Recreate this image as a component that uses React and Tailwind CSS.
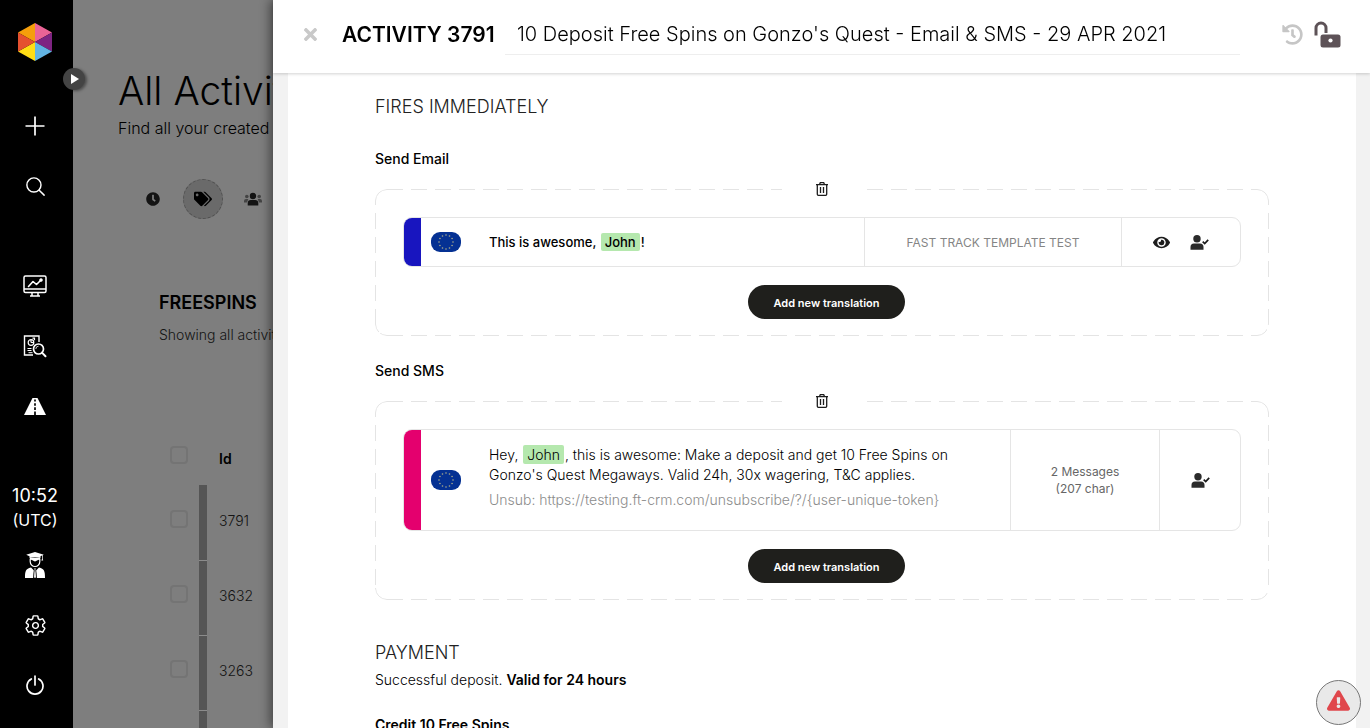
import React from "react";
import { FaTimes, FaHistory, FaEye, FaTags, FaClock, FaExclamationTriangle } from "react-icons/fa";
import { IoSearchOutline, IoSettingsOutline } from "react-icons/io5";

function Logo() {
  return (
    <svg width="34" height="38" viewBox="0 0 34 38" aria-hidden="true">
      <path d="M17 19V0L0 9.5z" fill="#f59e0b" />
      <path d="M17 19V0l17 9.5z" fill="#ea6396" />
      <path d="M17 19 34 9.500v19z" fill="#7e2482" />
      <path d="M17 19 34 28.500 17 38z" fill="#62b4e3" />
      <path d="M17 19v19L0 28.500z" fill="#ffdd15" />
      <path d="M17 19 0 28.500v-19z" fill="#e5502f" />
    </svg>
  );
}

function PlusIcon() {
  return (
    <svg width="20" height="20" viewBox="0 0 20 20" fill="none" stroke="#fff" strokeWidth="1.700" aria-hidden="true">
      <path d="M10 .5v19M.5 10h19" />
    </svg>
  );
}

function MonitorIcon() {
  return (
    <svg width="24" height="22" viewBox="0 0 24 22" fill="none" stroke="#fff" strokeWidth="1.500" aria-hidden="true">
      <rect x="1" y="1" width="22" height="16.500" rx="1.500" />
      <path d="M1 14h22" />
      <path d="M9 17.500V20.500M15 17.500V20.500M7 21h10" />
      <path d="M5.500 11.500l4.500-5 3.500 3L18 5" strokeLinecap="round" strokeLinejoin="round" strokeWidth="1.600" />
      <circle cx="18" cy="5" r="1.500" fill="#fff" strokeWidth=".5" />
    </svg>
  );
}

function ReportIcon() {
  return (
    <svg width="24" height="24" viewBox="0 0 24 24" fill="none" stroke="#fff" strokeWidth="1.400" aria-hidden="true">
      <path d="M10 21H1.500V2H16v6" />
      <circle cx="8" cy="8.500" r="2.800" strokeWidth="1.200" />
      <path d="M8 8.500V5.700M8 8.500h3M9.500 4.200h2v2" strokeWidth="1.200" />
      <path d="M4.500 14.500h4M4.500 16.500h4M5.500 18.700h4" strokeWidth="1" />
      <circle cx="15.500" cy="15" r="5" strokeWidth="1.700" />
      <path d="M12.800 15a2.800 2.800 0 0 1 2.700-2.800" strokeWidth=".8" />
      <path d="M19 18.600l3.500 3.600" strokeWidth="2" strokeLinecap="round" />
    </svg>
  );
}

function RoadIcon() {
  return (
    <svg width="22" height="17" viewBox="0 0 22 17" aria-hidden="true">
      <path d="M8.500 0h5L22 17H0z" fill="#fff" />
      <path d="M11 1.500v2M11 5.200v2.600M11 9.300v2.700M11 13.500V17" stroke="#000" strokeWidth="1.700" />
    </svg>
  );
}

function GraduateIcon() {
  return (
    <svg width="20" height="26" viewBox="0 0 20 26" aria-hidden="true">
      <path d="M10 0 1.200 2.800 4.500 4.200V6q5.500-1.600 11 0V4.200L17 3.600V7l-.7 1.500h1.900L17.700 7V3.300l1.100-.5z" fill="#fff" />
      <path d="M5.200 6.500v3c0 2.800 2.200 5 4.800 5s4.800-2.200 4.800-5v-3" fill="none" stroke="#fff" strokeWidth="1.200" />
      <path d="M5 7.800c3 0 3.200 1.600 5 1.600s2-1.600 5-1.600v-2H5z" fill="#fff" />
      <path d="M0 26c0-7 .8-9.300 6-10.500l3 3-.8 7.500zM20 26c0-7-.8-9.300-6-10.500l-3 3 .8 7.500z" fill="#fff" />
      <path d="M8.800 16h2.400l-.5 1.800L11.500 26h-3l.8-8.200z" fill="#fff" stroke="#000" strokeWidth=".7" />
    </svg>
  );
}

function PowerIcon() {
  return (
    <svg width="18" height="20" viewBox="0 0 18 20" fill="none" stroke="#fff" strokeWidth="1.700" strokeLinecap="round" aria-hidden="true">
      <path d="M9 1v9M5.300 4a8 8 0 1 0 7.400 0" />
    </svg>
  );
}

function GroupIcon() {
  return (
    <svg width="18" height="14" viewBox="0 0 18 14" aria-hidden="true">
      <g fill="#444">
        <circle cx="2.800" cy="4.500" r="1.800" />
        <circle cx="15.200" cy="4.500" r="1.800" />
        <path d="M0 10.500V9a2 2 0 0 1 2-2h2.300L3 10.500zM18 10.500V9a2 2 0 0 0-2-2h-2.300L15 10.500z" />
      </g>
      <g fill="#141414">
        <circle cx="9" cy="4" r="3.200" />
        <path d="M3.700 13.500v-2.300A3.200 3.200 0 0 1 6.900 8h4.200a3.200 3.200 0 0 1 3.200 3.200v2.300z" />
      </g>
    </svg>
  );
}

function UnlockIcon() {
  return (
    <svg width="27" height="27" viewBox="0 0 27 27" aria-hidden="true">
      <path d="M2 14.500V7a5 5 0 0 1 10 0v5" fill="none" stroke="#5d5257" strokeWidth="3" />
      <rect x="6.500" y="13.500" width="20" height="13" rx="2.500" fill="#5d5257" />
      <circle cx="16.500" cy="19.500" r="2.100" fill="#fff" />
    </svg>
  );
}

function TrashIcon() {
  return (
    <svg width="12" height="14" viewBox="0 0 12 14" fill="none" stroke="#1d1d1d" strokeWidth="1.300" aria-hidden="true">
      <path d="M0 2.700h12M1.300 2.700v9.500q0 1.100 1.100 1.100h7.200q1.100 0 1.100-1.100V2.700M3.500 2.500 4.300.7h3.400l.8 1.800M4.500 5v6M7.500 5v6" />
    </svg>
  );
}

function UserCheckIcon() {
  return (
    <svg width="19" height="15" viewBox="0 0 19 15" aria-hidden="true">
      <circle cx="7" cy="3.800" r="3.700" fill="#2b2b2b" />
      <path d="M.5 14.700V12a3.500 3.500 0 0 1 3.500-3.500h6A3.500 3.500 0 0 1 13.500 12v2.700z" fill="#2b2b2b" />
      <path d="M12.700 6.600l2 1.900 3.500-3.700" fill="none" stroke="#1a1a1a" strokeWidth="1.700" />
    </svg>
  );
}

const stars = Array.from({ length: 12 }, (_, i) => {
  const a = (i * Math.PI) / 6;
  return [15 + 7 * Math.sin(a), 10 - 7 * Math.cos(a)];
});

function EuFlag() {
  return (
    <svg width="30" height="20" viewBox="0 0 30 20" className="shrink-0" role="img" aria-label="European Union">
      <rect width="30" height="20" rx="9" fill="#053193" />
      {stars.map(([x, y], i) => (
        <circle key={i} cx={x} cy={y} r=".8" fill="#a9ab8c" />
      ))}
    </svg>
  );
}

function NavButton({ label, children }) {
  return (
    <button type="button" aria-label={label} className="flex h-[60px] w-full shrink-0 items-center justify-center text-white">
      {children}
    </button>
  );
}

function Sidebar() {
  return (
    <nav className="relative z-10 flex w-[73px] shrink-0 flex-col items-center justify-between bg-black pr-[3px] text-white">
      <div className="flex w-full flex-col items-center pt-[23px]">
        <Logo />
        <div className="h-[35px]" />
        <NavButton label="Create"><PlusIcon /></NavButton>
        <NavButton label="Search"><IoSearchOutline size={23} /></NavButton>
        <div className="h-10" />
        <NavButton label="Dashboard"><MonitorIcon /></NavButton>
        <NavButton label="Reports"><ReportIcon /></NavButton>
        <NavButton label="Lifecycles"><RoadIcon /></NavButton>
      </div>
      <div className="flex w-full flex-col items-center pb-[13px]">
        <div className="pb-[3px] text-center">
          <div className="text-lg leading-6">10:52</div>
          <div className="text-base leading-6">(UTC)</div>
        </div>
        <NavButton label="Academy"><GraduateIcon /></NavButton>
        <NavButton label="Settings"><IoSettingsOutline size={23} /></NavButton>
        <NavButton label="Log out"><PowerIcon /></NavButton>
      </div>
      <button type="button" aria-label="Expand menu" className="absolute top-[68px] -right-3 flex size-[22px] items-center justify-center rounded-full bg-[#444] pl-[2px] shadow-[2px_1px_3px_rgba(0,0,0,0.4)]">
        <svg width="8" height="10" viewBox="0 0 8 10" aria-hidden="true"><path d="M0 0l8 5-8 5z" fill="#fff" /></svg>
      </button>
    </nav>
  );
}

function Check({ label }) {
  return <input type="checkbox" aria-label={label} className="block size-[18px] appearance-none rounded-sm border-2 border-[#747474]" />;
}

function ActivityList() {
  return (
    <main className="flex-1 overflow-hidden bg-[#7e7e7e] pl-[45px] whitespace-nowrap text-black">
      <h1 className="pt-[66px] text-[39px] leading-[50px] font-light">All Activities</h1>
      <p className="text-base leading-6 font-light">Find all your created activities</p>
      <div className="mt-[39px] flex items-center pl-[28px]">
        <button type="button" aria-label="Recent" className="text-[#141414]"><FaClock size={14} /></button>
        <button type="button" aria-label="Tags" className="ml-[23px] flex size-10 items-center justify-center rounded-full border border-dashed border-[#525252] bg-[#6a6a6a]"><FaTags size={18} /></button>
        <button type="button" aria-label="Segments" className="ml-[21px]"><GroupIcon /></button>
      </div>
      <div className="pt-[72px] pl-[41px]">
        <h2 className="text-lg leading-6 font-semibold">FREESPINS</h2>
        <p className="mt-2 text-sm leading-6 font-light text-[#141414]">Showing all activities</p>
        <table className="mt-[85px] border-collapse text-left">
          <thead>
            <tr className="h-[53px]">
              <th className="w-10 pb-[7px] pl-[11px]"><Check label="Select all" /></th>
              <th className="w-2 p-0" />
              <th className="p-0 pl-3 text-sm font-semibold">Id</th>
            </tr>
          </thead>
          <tbody>
            {["3791", "3632", "3263", "3262"].map((id) => (
              <tr key={id} className="h-[75px]">
                <td className="w-10 pb-[7px] pl-[11px]"><Check label={"Select " + id} /></td>
                <td className="w-2 border-b border-[#8c8c8c] bg-[#555] p-0" />
                <td className="pb-[3px] pl-3 text-sm font-light text-[#141414]">{id}</td>
              </tr>
            ))}
          </tbody>
        </table>
      </div>
    </main>
  );
}

function DashedBox({ children }) {
  return (
    <div className="relative px-7 pt-7 pb-[17px]">
      <div className="pointer-events-none absolute inset-0 rounded-[12px] border border-[#e4e4e4] [mask-image:repeating-linear-gradient(90deg,#000_0_4px,transparent_4px_12px,#000_12px_24px),repeating-linear-gradient(90deg,#000_0_4px,transparent_4px_12px,#000_12px_24px),repeating-linear-gradient(180deg,#000_0_16px,transparent_16px_24px),repeating-linear-gradient(180deg,#000_0_16px,transparent_16px_24px)] [mask-position:top,bottom,left,right] [mask-repeat:no-repeat] [mask-size:100%_12px,100%_12px,12px_100%,12px_100%]" />
      <button type="button" aria-label="Delete action" className="absolute -top-[7px] left-1/2 flex w-[80px] -translate-x-1/2 justify-center bg-white">
        <TrashIcon />
      </button>
      {children}
      <div className="mt-[18px] flex justify-center pl-[9px]">
        <button type="button" className="h-[34px] rounded-full bg-[#1f1f1c] px-[25px] pt-[2px] text-[11px] font-semibold text-white">Add new translation</button>
      </div>
    </div>
  );
}

function Token({ children }) {
  return <span className="mx-[1px] rounded-xs bg-[#b5e8ae] px-1 py-[1px]">{children}</span>;
}

function Activity() {
  return (
    <section role="dialog" aria-label="Activity 3791" className="fixed inset-y-0 right-0 left-[273px] z-20 flex flex-col bg-[#f2f2f2] text-black shadow-[-3px_0_10px_rgba(0,0,0,0.45)]">
      <header className="relative z-10 flex h-[73px] shrink-0 items-center bg-white pr-[29px] pb-[4px] pl-[30px] shadow-[0_1px_3px_rgba(0,0,0,0.18)]">
        <button type="button" aria-label="Close" className="flex w-[14px] justify-center text-[#c9c9c9]"><FaTimes size={19} className="shrink-0" /></button>
        <h2 className="ml-[25px] w-[163px] shrink-0 text-[21px] leading-8 font-semibold">ACTIVITY 3791</h2>
        <input aria-label="Activity name" defaultValue="10 Deposit Free Spins on Gonzo's Quest - Email & SMS - 29 APR 2021" className="h-10 min-w-0 flex-1 border-b border-[#eee] pl-3 text-xl font-light outline-none" />
        <button type="button" aria-label="History" className="ml-[42px] text-[#c6c6c6]"><FaHistory size={21} /></button>
        <button type="button" aria-label="Unlock" className="ml-[11px]"><UnlockIcon /></button>
      </header>
      <div className="mr-[14px] ml-[15px] flex-1 overflow-hidden bg-white px-[87px] pt-[22px]">
        <h3 className="text-lg leading-6 font-light text-[#222]">FIRES IMMEDIATELY</h3>
        <h4 className="mt-7 text-sm leading-6 font-medium">Send Email</h4>
        <div className="mt-[18px]">
          <DashedBox>
            <div className="flex h-[50px] rounded-[9px] border border-[#e5e5e5] text-sm">
              <div className="w-[17px] shrink-0 rounded-l-[8px] bg-[#1815bf]" />
              <div className="flex flex-1 items-center pl-[10px]">
                <EuFlag />
                <p className="ml-7 text-[13px] font-medium">This is awesome, <Token>John</Token>!</p>
              </div>
              <div className="flex w-[257px] items-center justify-center border-l border-[#e5e5e5] pt-[2px] text-xs text-[#858585]">FAST TRACK TEMPLATE TEST</div>
              <div className="flex w-[119px] items-center justify-center gap-5 border-l border-[#e5e5e5]">
                <button type="button" aria-label="Preview" className="text-[#1d1d1d]"><FaEye size={17} /></button>
                <button type="button" aria-label="Test on user"><UserCheckIcon /></button>
              </div>
            </div>
          </DashedBox>
        </div>
        <h4 className="mt-[23px] text-sm leading-6 font-medium">Send SMS</h4>
        <div className="mt-[18px]">
          <DashedBox>
            <div className="flex h-[102px] rounded-[9px] border border-[#e5e5e5] text-sm">
              <div className="w-[17px] shrink-0 rounded-l-[8px] bg-[#e4006e]" />
              <div className="flex flex-1 items-center pl-[10px]">
                <EuFlag />
                <div className="ml-7 pb-[6px] leading-5 font-light">
                  <p>Hey, <Token>John</Token>, this is awesome: Make a deposit and get 10 Free Spins on<br />Gonzo's Quest Megaways. Valid 24h, 30x wagering, T&amp;C applies.</p>
                  <p className="mt-[5px] text-[#8c8c8c]">Unsub: https://testing.ft-crm.com/unsubscribe/?/{"{user-unique-token}"}</p>
                </div>
              </div>
              <p className="flex w-[149px] items-center justify-center border-l border-[#e5e5e5] text-center text-xs leading-[17px] text-[#666]">2 Messages<br />(207 char)</p>
              <div className="flex w-[81px] items-center justify-center border-l border-[#e5e5e5]">
                <button type="button" aria-label="Test on user"><UserCheckIcon /></button>
              </div>
            </div>
          </DashedBox>
        </div>
        <h3 className="mt-[41px] text-lg leading-6 font-light text-[#222]">PAYMENT</h3>
        <p className="mt-[3px] text-sm leading-6 font-light">Successful deposit. <strong className="font-semibold">Valid for 24 hours</strong></p>
        <h4 className="mt-[21px] text-sm leading-6 font-semibold">Credit 10 Free Spins</h4>
      </div>
      <button type="button" aria-label="Show errors" className="absolute right-[9px] bottom-[3px] z-10 flex size-[45px] items-center justify-center rounded-full border border-[#777] bg-[#e9e9e9] pb-1 text-[#e0474c]">
        <FaExclamationTriangle size={23} />
      </button>
    </section>
  );
}

export default function App() {
  return (
    <div className="flex h-screen overflow-hidden font-['Inter',sans-serif]">
      <Sidebar />
      <ActivityList />
      <Activity />
    </div>
  );
}
